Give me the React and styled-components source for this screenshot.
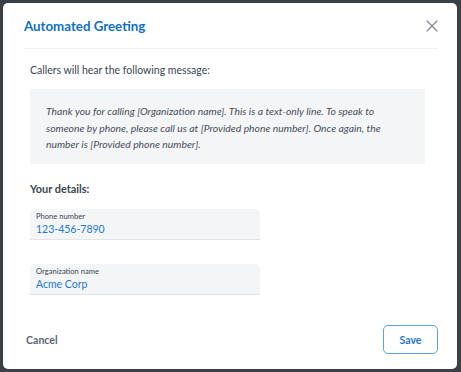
import React from 'react';
import styled, { createGlobalStyle } from 'styled-components';

const GlobalStyle = createGlobalStyle`
  html, body {
    margin: 0;
    padding: 0;
    background: #3b3f46;
    font-family: Lato, "Open Sans", sans-serif;
  }
`;

const Backdrop = styled.div`
  width: 461px;
  height: 372px;
  padding: 3px 4px 3px 3px;
  box-sizing: border-box;
  background: #3b3f46;
`;

const Dialog = styled.div`
  height: 100%;
  background: #ffffff;
  border-radius: 5px;
  display: flex;
  flex-direction: column;
  padding: 0 19px 0 21px;
  box-sizing: border-box;
`;

const Header = styled.div`
  display: flex;
  align-items: center;
  justify-content: space-between;
  height: 45px;
  border-bottom: 1px solid #eef0f2;
`;

const Title = styled.h2`
  margin: 0;
  font-size: 13.3px;
  font-weight: 700;
  color: #0e6fc7;
`;

const CloseButton = styled.button`
  border: none;
  background: none;
  padding: 0;
  margin-right: -1px;
  width: 14px;
  height: 14px;
  display: flex;
  cursor: pointer;
`;

const Body = styled.div`
  padding: 0 13px 0 6px;
  flex: 1;
`;

const Intro = styled.p`
  margin: 13px 0 0;
  font-size: 10.5px;
  line-height: 17px;
  color: #3c4650;
`;

const MessageBox = styled.div`
  margin-top: 10px;
  background: #f4f5f7;
  padding: 14px 16px 11px 16px;
  font-style: italic;
  font-size: 10.35px;
  line-height: 16.5px;
  color: #474e57;
`;

const SectionLabel = styled.h3`
  margin: 18px 0 13px;
  font-size: 10.9px;
  line-height: 14px;
  font-weight: 700;
  color: #3c4650;
`;

const Fields = styled.div`
  display: flex;
  flex-direction: column;
  gap: 24px;
`;

const Field = styled.div`
  width: 230px;
  height: 31px;
  box-sizing: border-box;
  background: #f4f5f7;
  border-radius: 5px 5px 0 0;
  border-bottom: 1px solid #e2e4e7;
  padding: 2px 6px 0;
  display: flex;
  flex-direction: column;
`;

const FieldLabel = styled.span`
  font-size: 7.6px;
  line-height: 11px;
  color: #3c4650;
`;

const FieldValue = styled.span`
  font-size: 10.5px;
  line-height: 15px;
  color: #1f78d1;
`;

const Footer = styled.div`
  display: flex;
  align-items: center;
  justify-content: space-between;
  padding: 0 0 15px 2px;
`;

const TextButton = styled.button`
  border: none;
  background: none;
  padding: 0;
  font-family: inherit;
  font-size: 10.6px;
  font-weight: 700;
  color: #5c6670;
  cursor: pointer;
`;

const OutlineButton = styled.button`
  width: 55px;
  height: 29px;
  box-sizing: border-box;
  border: 1px solid #5ba3e6;
  border-radius: 5px;
  background: #fff;
  font-family: inherit;
  font-size: 10.6px;
  font-weight: 700;
  color: #1f78d1;
  cursor: pointer;
`;

const fields = [
  { label: 'Phone number', value: '123-456-7890' },
  { label: 'Organization name', value: 'Acme Corp' },
];

export default function App() {
  return (
    <>
      <GlobalStyle />
      <Backdrop>
        <Dialog>
          <Header>
            <Title>Automated Greeting</Title>
            <CloseButton aria-label="Close">
              <svg width="14" height="14" viewBox="0 0 14 14">
                <path d="M2 2 L12 12 M12 2 L2 12" stroke="#7f868f" strokeWidth="1.2" strokeLinecap="round" />
              </svg>
            </CloseButton>
          </Header>
          <Body>
            <Intro>Callers will hear the following message:</Intro>
            <MessageBox>
              Thank you for calling [Organization name]. This is a text-only line. To speak to
              someone by phone, please call us at [Provided phone number]. Once again, the
              number is [Provided phone number].
            </MessageBox>
            <SectionLabel>Your details:</SectionLabel>
            <Fields>
              {fields.map((f) => (
                <Field key={f.label}>
                  <FieldLabel>{f.label}</FieldLabel>
                  <FieldValue>{f.value}</FieldValue>
                </Field>
              ))}
            </Fields>
          </Body>
          <Footer>
            <TextButton>Cancel</TextButton>
            <OutlineButton>Save</OutlineButton>
          </Footer>
        </Dialog>
      </Backdrop>
    </>
  );
}
